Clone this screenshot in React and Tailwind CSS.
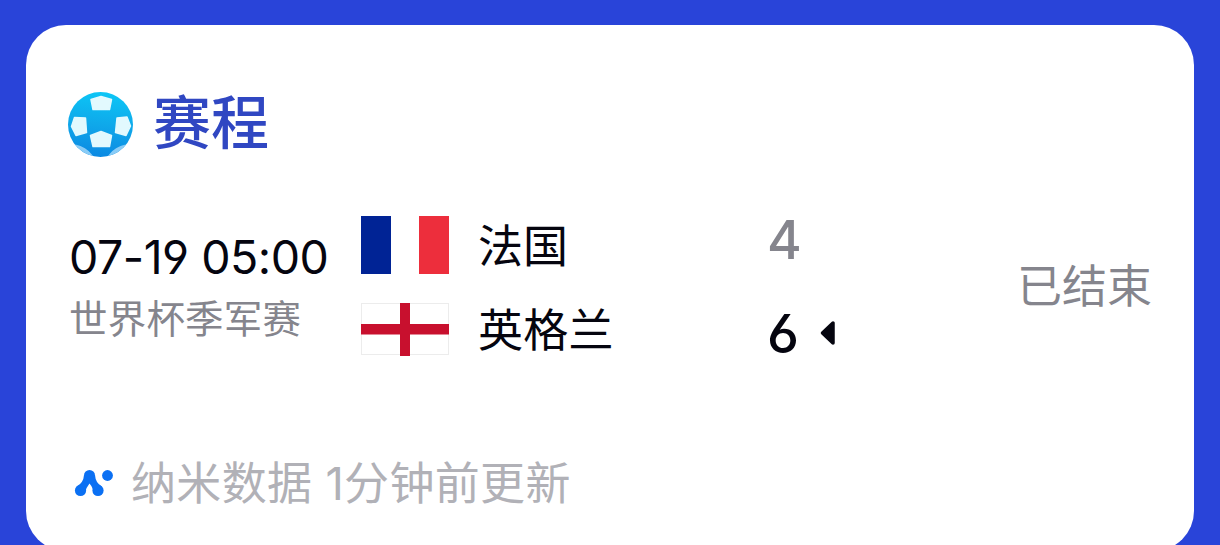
import React from "react";

const teams = [
  { name: "法国", score: 4, Flag: FranceFlag, winner: false },
  { name: "英格兰", score: 6, Flag: EnglandFlag, winner: true },
];

function FootballIcon() {
  return (
    <svg viewBox="0 0 66 66" className="w-[66px] h-[66px] shrink-0">
      <defs>
        <linearGradient id="ball" x1="0.55" y1="0" x2="0.45" y2="1">
          <stop offset="0" stopColor="#0cc6f6" />
          <stop offset="0.5" stopColor="#0fa8ea" />
          <stop offset="1" stopColor="#0b88e2" />
        </linearGradient>
        <clipPath id="ballClip">
          <circle cx="32.500" cy="32.500" r="32.500" />
        </clipPath>
      </defs>
      <g clipPath="url(#ballClip)">
        <rect width="66" height="66" fill="url(#ball)" />
        <path d="M0 21Q8 8 21 0H0z" fill="#6fdcfa" />
        <path d="M65 21Q57 8 44 0H66z" fill="#6fdcfa" />
        <ellipse cx="14" cy="61" rx="13" ry="5.500" transform="rotate(32 14 61)" fill="#8accf6" />
        <ellipse cx="51" cy="61" rx="13" ry="5.500" transform="rotate(-32 51 61)" fill="#8accf6" />
      </g>
      <g fill="#e2f9fe" stroke="#e2f9fe" strokeWidth="1.500" strokeLinejoin="round">
        <path d="M33 4.500L43.500 7.500L41.500 17.500H25L23 7.500z" />
        <path d="M33 39.500L43.500 43.500L41.500 54.500H25L22.500 43.500z" />
        <path d="M6.500 25.500L17.500 26L18.500 40.500L8 43.500L3.500 34.500z" />
        <path d="M49 26L59 25L62.500 34L58 43.500L47.500 40.500z" />
      </g>
    </svg>
  );
}

function FranceFlag() {
  return (
    <div className="flex w-[88px] h-[58px]">
      <div className="w-[30px] bg-[#002395]" />
      <div className="flex-1 bg-white" />
      <div className="w-[30px] bg-[#ed2e3c]" />
    </div>
  );
}

function EnglandFlag() {
  return (
    <svg viewBox="0 0 88 53" className="w-[88px] h-[53px]">
      <rect x="0.5" y="0.5" width="87" height="51" fill="#fff" stroke="#ececec" />
      <path d="M39 0h10v53h-10zM0 21h88v10.500h-88z" fill="#c8102e" />
    </svg>
  );
}

function NamiLogo() {
  return (
    <svg viewBox="0 0 40 28" className="w-10 h-7 shrink-0">
      <g fill="#0b70f3">
        <circle cx="33.500" cy="5.500" r="5.400" />
        <circle cx="6.500" cy="20.500" r="5.600" />
        <circle cx="24" cy="20.500" r="5.600" />
        <circle cx="15.500" cy="5.500" r="5.500" />
        <path d="M10 5Q9.500 13 2.500 16.500L10.500 24Q12 17.500 15.500 13.500Q19 17.500 20 24L28 16.500Q21.500 13 21 5z" />
      </g>
    </svg>
  );
}

const App = () => {
  return (
    <div className="h-[545px] overflow-hidden bg-[#2944d9] px-[26px] pt-[25px] font-['Inter','Noto_Sans_CJK_SC',sans-serif] [font-feature-settings:'cv03','cv04']">
      <div className="h-[526px] rounded-[40px] bg-white px-[42px] pt-[66px] text-[#05050f]">
        {/* Title */}
        <div className="flex h-[67px] items-center">
          <FootballIcon />
          <h2 className="-mt-1 ml-[19px] text-[58px] leading-[66px] font-medium text-[#3047c2]">赛程</h2>
        </div>

        {/* Match */}
        <div className="mt-[58px] flex h-[142px]">
          <div className="w-[293px] pt-[13px] pl-px">
            <p className="text-[46.500px] leading-[56px] tracking-[-0.5px] whitespace-nowrap">07-19 05:00</p>
            <p className="mt-1 text-[38.500px] leading-[60px] tracking-[0.2px] text-[#85858d]">世界杯季军赛</p>
          </div>
          <div className="flex flex-1 flex-col">
            {teams.map(({ name, score, Flag, winner }) => (
              <div key={name} className="flex h-[87px] shrink-0 items-start">
                <Flag />
                <span className={winner ? "ml-[29px] w-[289px] text-[45px] leading-[56px] tracking-[0.3px]" : "ml-[29px] w-[289px] text-[45px] leading-[61px]"}>
                  {name}
                </span>
                <span className={winner ? "w-[53px] text-[54px] leading-[62px] font-medium" : "w-[53px] text-[53px] leading-[49px] font-medium text-[#85858d]"}>
                  {score}
                </span>
                {winner && (
                  <svg viewBox="0 0 16 26" className="mt-[17px] w-4 h-[26px]">
                    <path d="M2.500 13L13 3V23z" fill="#05050f" stroke="#05050f" strokeWidth="3.500" strokeLinejoin="round" />
                  </svg>
                )}
              </div>
            ))}
          </div>
          <div className="flex h-[142px] items-center text-[45px] text-[#85858d]">已结束</div>
        </div>

        {/* Data source */}
        <div className="mt-[95px] flex h-[62px] items-center text-[45px] text-[#b1b1b7]">
          <div className="mr-[17px] ml-[6px]">
            <NamiLogo />
          </div>
          <span className="tracking-[0.35px]">纳米数据 1分钟前更新</span>
        </div>
      </div>
    </div>
  );
};

export default App;
